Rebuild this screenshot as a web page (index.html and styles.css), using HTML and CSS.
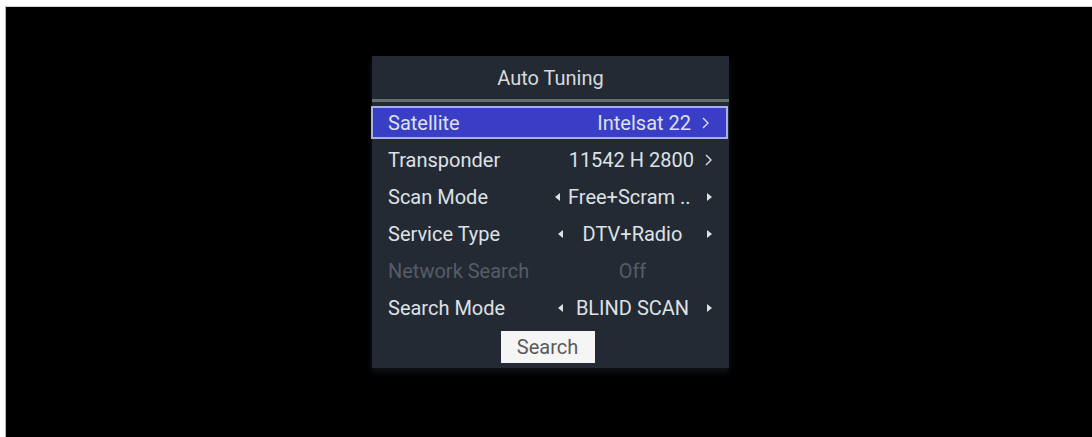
FILE: index.html
```html
<!DOCTYPE html>
<html lang="en">
<head>
    <meta charset="UTF-8">
    <meta name="viewport" content="width=device-width, initial-scale=1.0">
    <title>Auto Tuning</title>
    <link rel="stylesheet" href="styles.css">
</head>
<body>
    <div class="screen">
        <div class="panel">
            <div class="panel-title">Auto Tuning</div>
            <div class="divider"></div>

            <div class="menu">
                <div class="row active">
                    <span class="label">Satellite</span>
                    <span class="value value-link">
                        Intelsat 22
                        <svg class="chevron" viewBox="0 0 7 12"><path d="M1 1 L6 6 L1 11" /></svg>
                    </span>
                </div>

                <div class="row">
                    <span class="label">Transponder</span>
                    <span class="value value-link">
                        11542 H 2800
                        <svg class="chevron" viewBox="0 0 7 12"><path d="M1 1 L6 6 L1 11" /></svg>
                    </span>
                </div>

                <div class="row">
                    <span class="label">Scan Mode</span>
                    <span class="value value-pick value-cut">
                        <span class="arrow arrow-left"></span>
                        <span class="pick-text">Free+Scram ..</span>
                        <span class="arrow arrow-right"></span>
                    </span>
                </div>

                <div class="row">
                    <span class="label">Service Type</span>
                    <span class="value value-pick">
                        <span class="arrow arrow-left"></span>
                        <span class="pick-text">DTV+Radio</span>
                        <span class="arrow arrow-right"></span>
                    </span>
                </div>

                <div class="row disabled">
                    <span class="label">Network Search</span>
                    <span class="value value-pick">
                        <span class="pick-text">Off</span>
                    </span>
                </div>

                <div class="row">
                    <span class="label">Search Mode</span>
                    <span class="value value-pick">
                        <span class="arrow arrow-left"></span>
                        <span class="pick-text">BLIND SCAN</span>
                        <span class="arrow arrow-right"></span>
                    </span>
                </div>
            </div>

            <div class="actions">
                <button type="button" class="search-btn">Search</button>
            </div>
        </div>
    </div>
</body>
</html>
```

FILE: styles.css
```css
:root {
    --panel: #242a33;
    --text: #dde1e6;
    --muted: #555c67;
    --highlight: #3a3ec6;
    --highlight-edge: #a7b1e6;
}

html, body {
    margin: 0;
    height: 100%;
}

body {
    background: #fff;
    font-family: Roboto, 'Liberation Sans', sans-serif;
    overflow: hidden;
}

.screen {
    margin: 6px 0 0 5px;
    height: 431px;
    background: #000;
    border-left: 1px solid #b8b8b8;
    border-top: 1px solid #d0d0d0;
    padding: 49px 0 0 366px;
    box-sizing: border-box;
}

.panel {
    width: 357px;
    height: 312px;
    background: var(--panel);
    color: var(--text);
    box-shadow: 0 4px 6px rgba(20, 24, 30, 0.8);
}

.panel-title {
    height: 43px;
    display: flex;
    align-items: center;
    justify-content: center;
    font-size: 20px;
    color: #d6dade;
    padding-top: 1px;
    box-sizing: border-box;
}

.divider {
    height: 3px;
    background: #62706f;
    margin-bottom: 4px;
}

.menu {
    display: flex;
    flex-direction: column;
    gap: 4px;
}

.row {
    height: 33px;
    display: flex;
    align-items: center;
    justify-content: space-between;
    padding: 0 17px 0 16px;
    font-size: 20px;
    box-sizing: border-box;
}

.row.active {
    background: var(--highlight);
    border: 2px solid var(--highlight-edge);
    margin-left: -1px;
    margin-right: 1px;
    padding-left: 15px;
    padding-right: 17px;
}

.row.disabled {
    color: var(--muted);
}

.value-link {
    display: flex;
    align-items: center;
    gap: 11px;
}

.chevron {
    width: 7px;
    height: 12px;
    fill: none;
    stroke: var(--text);
    stroke-width: 1.4;
}

.value-pick {
    width: 156px;
    display: flex;
    align-items: center;
    justify-content: center;
    position: relative;
}

.pick-text {
    padding-right: 3px;
}

.value-cut {
    justify-content: flex-start;
    padding-left: 12px;
    box-sizing: border-box;
}

.arrow {
    position: absolute;
    top: 50%;
    width: 0;
    height: 0;
    border-top: 4px solid transparent;
    border-bottom: 4px solid transparent;
    margin-top: -4px;
}

.arrow-left {
    left: 2px;
    border-right: 5px solid var(--text);
}

.value-cut .arrow-left {
    left: -1px;
}

.arrow-right {
    right: 0;
    border-left: 5px solid var(--text);
}

.actions {
    display: flex;
    justify-content: center;
    margin-top: 7px;
}

.search-btn {
    width: 94px;
    height: 32px;
    background: #f5f5f5;
    color: #5a5a5a;
    border: none;
    border-radius: 0;
    font-family: Roboto, 'Liberation Sans', sans-serif;
    font-size: 20px;
    padding: 0;
    margin-left: -6px;
}
```
